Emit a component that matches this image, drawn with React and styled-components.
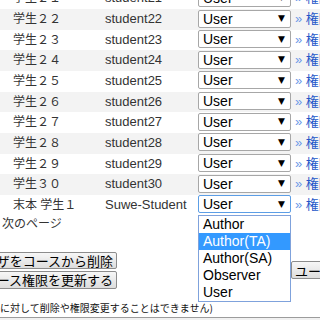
import styled, { createGlobalStyle } from "styled-components";

const GlobalStyle = createGlobalStyle`
  html, body {
    margin: 0;
    padding: 0;
    background: #fff;
    overflow: hidden;
  }

  body {
    font-family: "Liberation Sans", "Noto Sans CJK JP", sans-serif;
    color: #333;
  }
`;

const Page = styled.div`
  width: 320px;
  height: 320px;
  overflow: hidden;
`;

const Table = styled.div`
  margin-top: -11.67px;
`;

const Row = styled.div`
  display: grid;
  grid-template-columns: 92px 93px 93px 1fr;
  padding-left: 13px;
  height: 20.67px;
  background: ${({ $shaded }) => ($shaded ? "#f3f3f3" : "#fff")};
  font-size: 13px;
`;

const Cell = styled.div`
  line-height: 18px;
  padding-top: 1px;
  white-space: nowrap;
  color: #333;
  font-size: ${({ $name }) => ($name ? "12px" : "13px")};
`;

const RoleSelect = styled.div`
  position: relative;
  box-sizing: border-box;
  height: 18px;
  margin-top: 0.5px;
  display: flex;
  align-items: center;
  justify-content: space-between;
  padding: 0 5px 0 4px;
  border: 1px solid ${({ $focused }) => ($focused ? "#5c9ee6" : "#a7a7a7")};
  border-radius: 2px;
  background: #fff;
  font: 14px/16px "Liberation Sans", sans-serif;
  color: #000;
`;

const Arrow = styled.span`
  font: 9px/9px "DejaVu Sans", sans-serif;
  color: #000;
`;

const OptionList = styled.div`
  position: absolute;
  top: 19px;
  left: -1px;
  width: 93px;
  box-sizing: border-box;
  z-index: 10;
  border: 1px solid #7fa2dc;
  background: #fff;
`;

const Option = styled.div`
  height: 17px;
  line-height: 17px;
  padding-left: 4px;
  font: 14px/17px "Liberation Sans", sans-serif;
  background: ${({ $active }) => ($active ? "#3399ff" : "transparent")};
  color: ${({ $active }) => ($active ? "#fff" : "#000")};
`;

const RoleLink = styled.a`
  margin-left: 4px;
  line-height: 18px;
  padding-top: 1px;
  white-space: nowrap;
  overflow: hidden;
  color: #2457c9;
  text-decoration: none;

  span {
    color: #6b98e8;
  }
`;

const Pager = styled.div`
  height: 14px;
  padding-left: 2px;
  font: 12px/14px "Noto Sans CJK JP", sans-serif;
  color: #333;
`;

const Controls = styled.div`
  display: flex;
  align-items: center;
  margin-top: 22.3px;
`;

const ButtonStack = styled.div`
  display: flex;
  flex-direction: column;
  align-items: flex-start;
  gap: 2px;
  margin-left: -85px;
`;

const Button = styled.button`
  box-sizing: border-box;
  height: ${({ $tall }) => ($tall ? "18px" : "17px")};
  padding: 0 3px;
  border: 1px solid #8c8c8c;
  border-radius: 2px;
  background: linear-gradient(#f7f7f7, #dddddd);
  font: 13px/13px "Noto Sans CJK JP", sans-serif;
  color: #000;
  white-space: nowrap;
`;

const SideButton = styled(Button)`
  margin-left: 174px;
  flex-shrink: 0;
`;

const Note = styled.div`
  margin-top: 13px;
  margin-left: -50px;
  font: 10px/12px "Noto Sans CJK JP", sans-serif;
  color: #111;
  white-space: nowrap;
`;

const Divider = styled.div`
  margin-top: 3px;
  height: 10px;
  border-top: 1px solid #9c9c9c;
  background: #f1f1f1;
`;

const users = [
  { name: "学生２１", id: "student21" },
  { name: "学生２２", id: "student22" },
  { name: "学生２３", id: "student23" },
  { name: "学生２４", id: "student24" },
  { name: "学生２５", id: "student25" },
  { name: "学生２６", id: "student26" },
  { name: "学生２７", id: "student27" },
  { name: "学生２８", id: "student28" },
  { name: "学生２９", id: "student29" },
  { name: "学生３０", id: "student30" },
  { name: "末本 学生１", id: "Suwe-Student", open: true },
];

const roles = ["Author", "Author(TA)", "Author(SA)", "Observer", "User"];

const App = () => (
  <Page>
    <GlobalStyle />
    <Table>
      {users.map((user, index) => (
        <Row key={user.id} $shaded={index % 2 === 1}>
          <Cell $name>{user.name}</Cell>
          <Cell>{user.id}</Cell>
          <RoleSelect $focused={user.open}>
            User
            <Arrow>▼</Arrow>
            {user.open && (
              <OptionList>
                {roles.map((role) => (
                  <Option key={role} $active={role === "Author(TA)"}>
                    {role}
                  </Option>
                ))}
              </OptionList>
            )}
          </RoleSelect>
          <RoleLink href="#">
            <span>»</span> 権限変更
          </RoleLink>
        </Row>
      ))}
    </Table>
    <Pager>次のページ</Pager>
    <Controls>
      <ButtonStack>
        <Button>選択したユーザをコースから削除</Button>
        <Button $tall>各ユーザのコース権限を更新する</Button>
      </ButtonStack>
      <SideButton $tall>ユーザを追加</SideButton>
    </Controls>
    <Note>（自分自身に対して削除や権限変更することはできません)</Note>
    <Divider />
  </Page>
);

export default App;
